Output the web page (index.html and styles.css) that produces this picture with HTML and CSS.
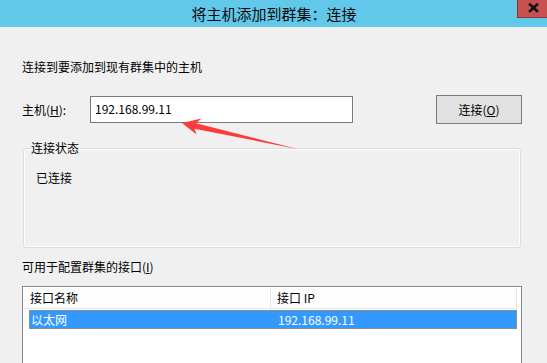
FILE: index.html
```html
<!DOCTYPE html>
<html lang="zh-CN">
<head>
<meta charset="utf-8">
<title>将主机添加到群集：连接</title>
<link rel="stylesheet" href="styles.css">
</head>
<body>
<div class="window">
  <div class="titlebar">
    <span class="title">将主机添加到群集：连接</span>
    <div class="close">
      <svg width="30" height="18" viewBox="0 0 30 18"><path d="M13 4.5 L20 11 M20 4.5 L13 11" stroke="#111" stroke-width="2.6" stroke-linecap="square"/></svg>
    </div>
  </div>
  <div class="content">
    <p class="intro">连接到要添加到现有群集中的主机</p>
    <div class="host-row">
      <span class="host-label">主机(<u>H</u>):</span>
      <div class="host-input">192.168.99.11</div>
      <div class="btn">连接(<u>O</u>)</div>
    </div>
    <fieldset class="status">
      <legend>连接状态</legend>
      <div class="status-body">已连接</div>
    </fieldset>
    <p class="list-label">可用于配置群集的接口(<u>I</u>)</p>
    <div class="listview">
      <div class="lv-header">
        <div class="lv-col c1">接口名称</div>
        <div class="lv-col c2">接口 IP</div>
      </div>
      <div class="lv-row selected">
        <span class="cell c1">以太网</span>
        <span class="cell c2">192.168.99.11</span>
      </div>
    </div>
  </div>
  <svg class="arrow" width="547" height="363" viewBox="0 0 547 363">
    <polygon points="182,123 201.5,118.5 196,123.2 298.5,149.2 194.5,128.8 196.5,134.5" fill="#ff3a3a"/>
  </svg>
</div>
</body>
</html>
```
FILE: styles.css
```css
html, body {
  margin: 0;
  padding: 0;
}
body {
  width: 547px;
  height: 363px;
  overflow: hidden;
  background: #f0f0f0;
  font-family: "Noto Sans CJK SC", "Microsoft YaHei", sans-serif;
  font-size: 12px;
  color: #000;
}
.window {
  position: relative;
  width: 547px;
  height: 363px;
  overflow: hidden;
}
.titlebar {
  position: relative;
  height: 27px;
  background: #62c8ea;
  display: flex;
  justify-content: center;
  align-items: center;
}
.title {
  font-size: 15px;
  line-height: 27px;
  color: #0a0a0a;
  padding-left: 1px;
}
.close {
  position: absolute;
  top: 0;
  right: 0;
  width: 30px;
  height: 18px;
  background: #c75050;
  box-shadow: inset 1px 0 0 #8a3434, inset 0 -1px 0 #8a3434;
}
.close svg {
  display: block;
}
.content {
  padding-left: 22px;
}
.intro {
  margin: 32px 0 0 0;
  line-height: 16px;
}
.host-row {
  margin-top: 20px;
  height: 29px;
  display: flex;
  align-items: center;
}
.host-label {
  width: 68px;
  line-height: 16px;
}
.host-input {
  width: 263px;
  height: 27px;
  box-sizing: border-box;
  border: 1px solid #7a7a7a;
  background: #fff;
  padding: 0 0 2px 4px;
  display: flex;
  align-items: center;
  font-size: 12px;
}
.btn {
  margin-left: 83px;
  width: 86px;
  height: 29px;
  box-sizing: border-box;
  border: 1px solid #7a7a7a;
  background: #e1e1e1;
  display: flex;
  align-items: center;
  justify-content: center;
}
.status {
  margin: 16px 0 0 1px;
  padding: 0 0 0 8px;
  width: 498px;
  box-sizing: border-box;
  border: 1px solid #d8dde2;
  border-radius: 3px;
  box-shadow: inset 0 0 0 1px #fff;
  min-inline-size: 0;
}
.status legend {
  padding: 0 1px 0 0;
  line-height: 16px;
  margin-left: -1px;
}
.status-body {
  height: 91px;
  box-sizing: border-box;
  padding: 14px 0 0 4px;
  line-height: 16px;
}
.list-label {
  margin: 11px 0 0 0;
  line-height: 16px;
}
.listview {
  margin-top: 11px;
  width: 500px;
  height: 100px;
  box-sizing: border-box;
  border: 1px solid #828790;
  background: #fff;
  padding: 1px 0 0 1px;
}
.lv-header {
  display: flex;
  height: 21px;
  width: 493px;
  box-sizing: border-box;
  border-bottom: 1px solid #e5e5e5;
  background: #fdfdfd;
}
.lv-col {
  box-sizing: border-box;
  padding-left: 6px;
  border-right: 1px solid #e5e5e5;
  line-height: 20px;
}
.lv-col.c1 {
  width: 247px;
}
.lv-col.c2 {
  width: 246px;
}
.lv-row {
  margin: 1px 0 0 5px;
  width: 488px;
  height: 19px;
  box-sizing: border-box;
  display: flex;
  align-items: center;
}
.lv-row.selected {
  background: #3399ff;
  color: #fff;
  border: 1px dotted #d9822b;
}
.cell {
  line-height: 17px;
}
.cell.c1 {
  width: 247px;
  padding-left: 1px;
}
.arrow {
  position: absolute;
  left: 0;
  top: 0;
  pointer-events: none;
}
```
